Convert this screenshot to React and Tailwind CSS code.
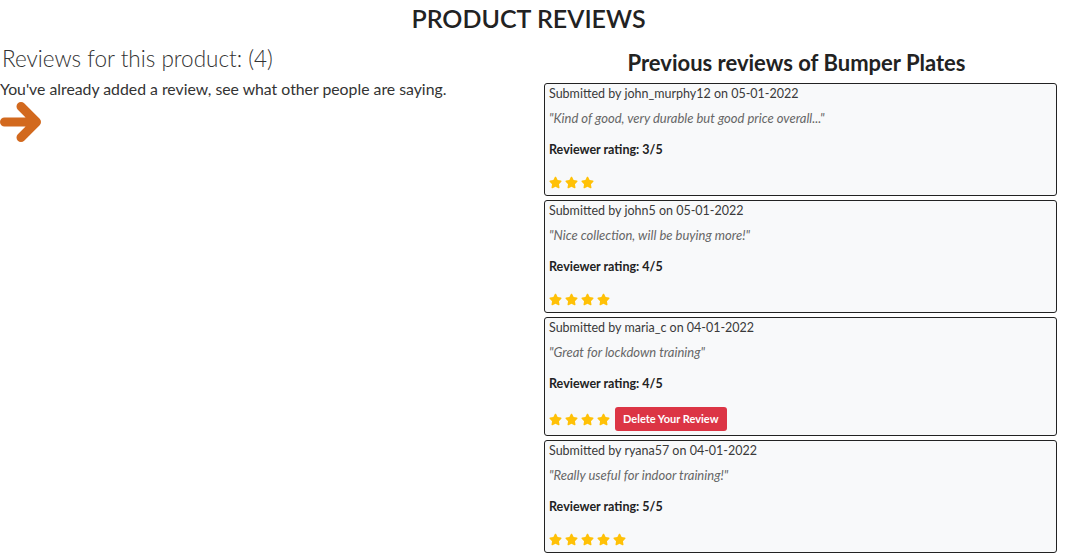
import { FaStar } from "react-icons/fa";

const reviews = [
  { user: "john_murphy12", date: "05-01-2022", text: "Kind of good, very durable but good price overall...", rating: 3 },
  { user: "john5", date: "05-01-2022", text: "Nice collection, will be buying more!", rating: 4 },
  { user: "maria_c", date: "04-01-2022", text: "Great for lockdown training", rating: 4, own: true },
  { user: "ryana57", date: "04-01-2022", text: "Really useful for indoor training!", rating: 5 },
];

function ArrowIcon() {
  return (
    <svg width="42" height="40" viewBox="0 0 42 40" className="mt-[2px] text-[#d2691e]">
      <path
        d="M4.5 20 H36 M21 4.5 L36.5 20 L21 35.5"
        fill="none"
        stroke="currentColor"
        strokeWidth="9"
        strokeLinecap="round"
        strokeLinejoin="round"
      />
    </svg>
  );
}

function ReviewCard({ review }) {
  return (
    <div className="border border-[#222] rounded-[3px] bg-[#f8f9fa] pl-1 pr-2 pb-[3px] text-[13px] leading-[20px]">
      <p className="text-[12.5px] text-[#3a3a3a]">
        Submitted by {review.user} on {review.date}
      </p>
      <p className="mt-1 italic text-[#666]">"{review.text}"</p>
      <p className="mt-3 text-[12.5px] font-bold text-[#222]">Reviewer rating: {review.rating}/5</p>
      <div className="mt-3 flex items-center min-h-[20px]">
        <div className="flex gap-[3px] text-[#ffc107]">
          {Array.from({ length: review.rating }).map((_, i) => (
            <FaStar key={i} size={13} />
          ))}
        </div>
        {review.own && (
          <button className="ml-[5px] my-[1px] h-6 px-2 rounded-[3px] bg-[#dc3545] text-white text-[11px] font-bold">
            Delete Your Review
          </button>
        )}
      </div>
    </div>
  );
}

export default function App() {
  return (
    <div className="w-[1057px] bg-white text-[#333] font-['Lato',sans-serif]">
      {/* Page title */}
      <h1 className="text-center text-[25px] leading-[36px] font-semibold text-[#222] mb-2">
        PRODUCT REVIEWS
      </h1>

      <div className="flex">
        {/* Left column */}
        <div className="w-[536px]">
          <h2 className="pl-[2px] text-[22.5px] leading-[30px] font-light text-[#333]">
            Reviews for this product: (4)
          </h2>
          <p className="mt-[4px] text-[15.8px] leading-[22px] text-[#333]">
            You've already added a review, see what other people are saying.
          </p>
          <ArrowIcon />
        </div>

        {/* Right column */}
        <div className="flex-1">
          <h2 className="text-center text-[22px] leading-[28px] font-bold text-[#222] mt-[5px]">
            Previous reviews of Bumper Plates
          </h2>
          <div className="ml-2 mt-[6px] flex flex-col gap-1">
            {reviews.map((r) => (
              <ReviewCard key={r.user} review={r} />
            ))}
          </div>
        </div>
      </div>
    </div>
  );
}
